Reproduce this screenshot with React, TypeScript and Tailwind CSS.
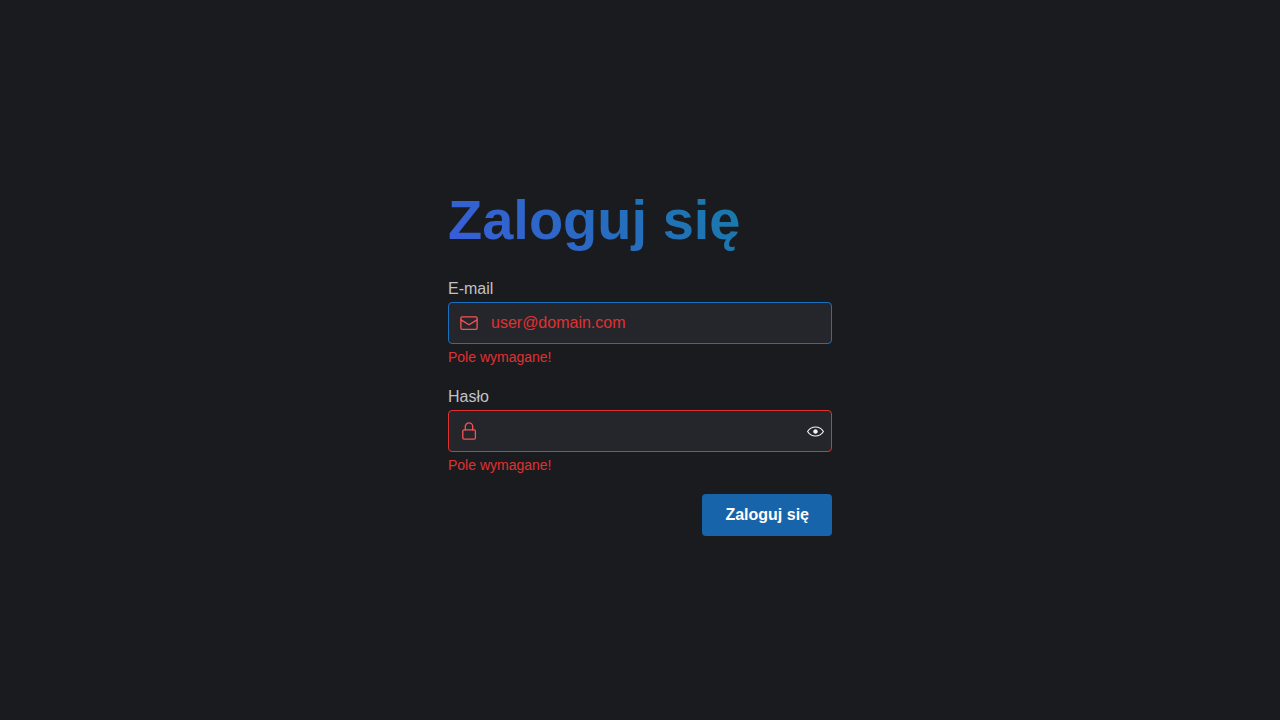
import { useState } from "react";
import type { FormEvent, ReactNode } from "react";
import { RxEyeClosed, RxEyeOpen } from "react-icons/rx";

type FieldProps = {
  id: string;
  label: string;
  error: string;
  children: ReactNode;
};

function Field({ id, label, error, children }: FieldProps) {
  return (
    <div className="flex flex-col">
      <label htmlFor={id} className="mb-0.5 self-start text-base leading-[22px]">
        {label}
      </label>
      {children}
      <p id={`${id}-error`} className="mt-[5px] text-sm leading-[17px] text-[#e03131]">
        {error}
      </p>
    </div>
  );
}

function LineIcon({ children }: { children: ReactNode }) {
  return (
    <svg
      viewBox="0 0 18 18"
      fill="none"
      stroke="currentColor"
      strokeWidth="1.3"
      strokeLinecap="round"
      strokeLinejoin="round"
      aria-hidden="true"
      className="size-[18px] shrink-0 text-[#fa5252]"
    >
      {children}
    </svg>
  );
}

function MailIcon() {
  return (
    <LineIcon>
      <rect x="0.9" y="2.8" width="16.2" height="12.5" rx="1.2" />
      <path d="M1 5.9 9 10.8l8-4.9" />
    </LineIcon>
  );
}

function LockIcon() {
  return (
    <LineIcon>
      <rect x="2.8" y="7.9" width="12.6" height="9.2" rx="1.3" />
      <path d="M5.3 7.9V4.6a3.7 3.7 0 0 1 7.4 0v3.3" />
    </LineIcon>
  );
}

const boxClass = "flex h-[42px] items-center rounded border bg-[#25262b] pl-[11px]";
const inputClass =
  "h-full min-w-0 flex-1 bg-transparent pl-[13px] text-base text-[#e03131] outline-none placeholder:text-[#e03131]";

export default function App() {
  const [visible, setVisible] = useState(false);
  const [active, setActive] = useState("email");

  return (
    <main className="flex min-h-screen items-center justify-center bg-[#1a1b1e] font-['Liberation_Sans',Arial,sans-serif] text-[#c1c2c5]">
      <form
        noValidate
        onSubmit={(event: FormEvent) => event.preventDefault()}
        className="flex w-full max-w-96 flex-col gap-5"
      >
        <h1 className="mb-0.5 bg-linear-45/srgb from-[#3b5bdb] to-[#0c8599] bg-clip-text text-[56px] leading-[72px] font-bold text-transparent">
          Zaloguj się
        </h1>

        <Field id="email" label="E-mail" error="Pole wymagane!">
          <div className={`${boxClass} ${active === "email" ? "border-[#1971c2]" : "border-[#e03131]"}`}>
            <MailIcon />
            <input
              id="email"
              type="email"
              placeholder="user@domain.com"
              aria-invalid="true"
              aria-describedby="email-error"
              onFocus={() => setActive("email")}
              className={inputClass}
            />
          </div>
        </Field>

        <Field id="password" label="Hasło" error="Pole wymagane!">
          <div className={`${boxClass} ${active === "password" ? "border-[#1971c2]" : "border-[#e03131]"}`}>
            <LockIcon />
            <input
              id="password"
              type={visible ? "text" : "password"}
              aria-invalid="true"
              aria-describedby="password-error"
              onFocus={() => setActive("password")}
              className={inputClass}
            />
            <button
              type="button"
              aria-label={visible ? "Ukryj hasło" : "Pokaż hasło"}
              onClick={() => setVisible(!visible)}
              className="flex h-full w-8 shrink-0 items-center justify-center rounded text-[#f1f3f5]"
            >
              {visible ? <RxEyeClosed size={17} /> : <RxEyeOpen size={17} />}
            </button>
          </div>
        </Field>

        <button
          type="submit"
          className="h-[42px] self-end rounded bg-[#1864ab] px-[23px] text-base font-bold text-white"
        >
          Zaloguj się
        </button>
      </form>
    </main>
  );
}
